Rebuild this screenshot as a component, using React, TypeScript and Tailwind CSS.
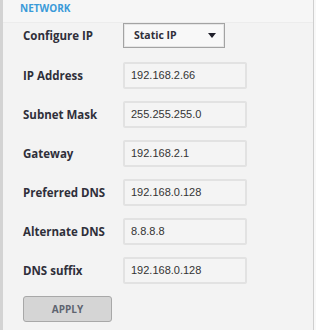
const fields = [
  { label: "IP Address", value: "192.168.2.66" },
  { label: "Subnet Mask", value: "255.255.255.0" },
  { label: "Gateway", value: "192.168.2.1" },
  { label: "Preferred DNS", value: "192.168.0.128" },
  { label: "Alternate DNS", value: "8.8.8.8" },
  { label: "DNS suffix", value: "192.168.0.128" },
];

export default function App() {
  return (
    <div className="flex h-[330px] w-[316px] bg-[#f3f3f3] font-['Open_Sans',sans-serif]">
      {/* left rail */}
      <div className="w-[3px] bg-[#d3d3d3]" />

      <div className="flex w-[310px] flex-col">
        {/* Header */}
        <div className="h-[23px] border-b border-[#ececec] bg-[#f6f6f6] pl-[17px] pt-[1px] text-[10px] font-bold text-[#3a9ad9]">
          NETWORK
        </div>

        <div className="flex flex-col pl-[20px]">
          <div className="flex items-center">
            <span className="w-[100px] text-[11.5px] font-bold text-[#2f2f3a]">
              Configure IP
            </span>
            <div className="flex h-[25px] w-[102px] items-center justify-between border border-[#a3a3a3] bg-[#f8f8f8] pl-[10px] pr-[8px] shadow-[inset_0_0_0_1px_#e6e6e6]">
              <span className="text-[10.5px] font-bold text-[#2f2f3a]">
                Static IP
              </span>
              <svg width="8" height="5" viewBox="0 0 8 5">
                <path d="M0 0h8L4 5z" fill="#1f1f2a" />
              </svg>
            </div>
          </div>

          {/* Inputs */}
          <div className="mt-[14px] flex flex-col gap-[12px]">
            {fields.map((f) => (
              <div key={f.label} className="flex items-center">
                <span className="w-[100px] text-[11.5px] font-bold text-[#2f2f3a]">
                  {f.label}
                </span>
                <div className="flex h-[27px] w-[124px] items-center rounded-[2px] border-2 border-[#e2e2e2] bg-[#f4f4f4] pl-[6px] font-['Liberation_Sans',Arial,sans-serif] text-[11px] text-[#333]">
                  {f.value}
                </div>
              </div>
            ))}
          </div>

          <button className="mt-[12px] flex h-[26px] w-[89px] items-center justify-center rounded-[3px] border border-[#a8a8a8] bg-[#d5d5d5] text-[10px] font-bold text-[#5e6470]">
            APPLY
          </button>
        </div>
      </div>

      {/* right edge */}
      <div className="w-[1px] bg-[#cfcfcf]" />
      <div className="w-[2px] bg-[#f8f8f8]" />
    </div>
  );
}
